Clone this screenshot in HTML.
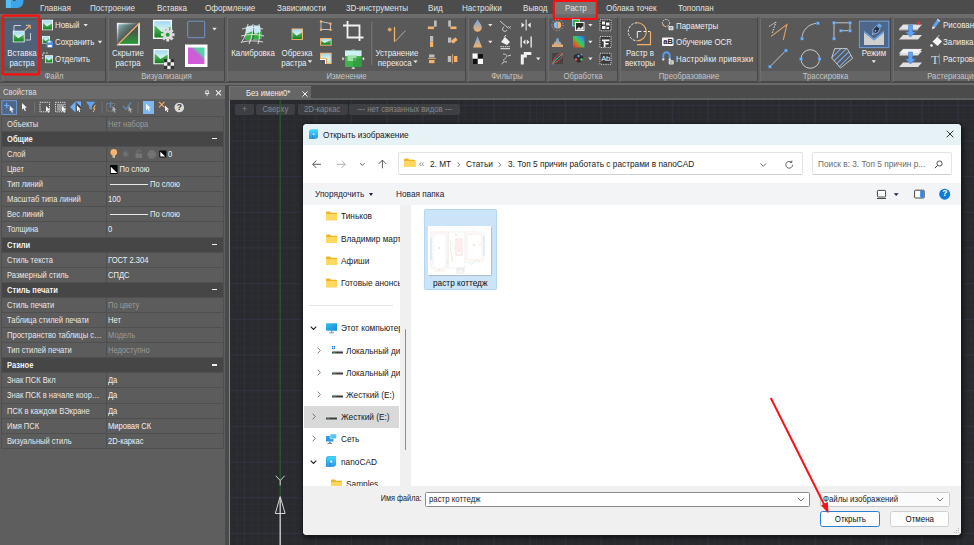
<!DOCTYPE html>
<html lang="ru">
<head>
<meta charset="utf-8">
<title>nanoCAD — Открыть изображение</title>
<style>
*{box-sizing:border-box;margin:0;padding:0}
html,body{width:974px;height:545px;overflow:hidden;background:#5e5e5e;font-family:"Liberation Sans","DejaVu Sans",sans-serif;font-size:9px;color:#e6e6e6}
.abs{position:absolute}
#app{position:relative;width:974px;height:545px;overflow:hidden;background:#5e5e5e}
/* menu */
#menu{left:0;top:0;width:974px;height:14px;background:#4c4c4c}
#menu span{position:absolute;top:2.8px;font-size:9.3px;color:#e2e2e2;white-space:nowrap;transform:scaleX(.87);transform-origin:0 50%}
#rtab{left:554px;top:1px;width:43px;height:14px;background:#787878}
/* ribbon */
#ribbon{left:0;top:14px;width:974px;height:71px;background:linear-gradient(#6e6e6e 0,#6a6a6a 2.5px,#5f5f5f 2.5px,#5f5f5f 68px,#4a4a4a 68px,#4a4a4a 69px,#6a6a6a 69px)}
.grp{position:absolute;top:2.5px;height:65.5px;background:linear-gradient(#595959 0,#595959 53.5px,#656565 53.5px);border:1px solid #6e6e6e;border-right-color:#474747;border-bottom-color:#474747}
.grp .lbl{position:absolute;left:0;right:0;bottom:-1px;height:11px;text-align:center;font-size:8.6px;line-height:11px;color:#c4c4c4;transform:scaleX(.9)}
.rt{position:absolute;font-size:8.8px;color:#ececec;white-space:nowrap;line-height:10px;transform:scaleX(.9);transform-origin:0 50%}
.rt.c{transform-origin:50% 50%;text-align:center}
.tri{position:absolute;width:0;height:0;border-left:2.5px solid transparent;border-right:2.5px solid transparent;border-top:3px solid #e4e4e4}
/* props */
#ptitle{left:0;top:86px;width:225px;height:12.500px;background:#6b6b6b;font-size:8.7px;line-height:13px;color:#dedede;padding-left:3px}
#ptitle span{display:inline-block;transform:scaleX(.88);transform-origin:0 50%}
#ptool{left:0;top:99px;width:225px;height:17px;background:#5c5c5c}
#ptab{left:1px;top:115.800px;width:223px;height:333px;background:#5c5c5c;border:1px solid #4f4f4f}
.row{position:absolute;left:0;width:221px;height:15.1px;border-bottom:1px solid #4f4f4f;font-size:8.7px;line-height:14px;white-space:nowrap}
.row .k{position:absolute;left:5px;top:0;color:#e8e8e8;width:113px;overflow:hidden;transform:scaleX(.87);transform-origin:0 50%}
.row .v{position:absolute;left:106px;top:0;color:#f0f0f0;transform:scaleX(.87);transform-origin:0 50%}
.row .v.d{color:#9a9a9a}
.row.h{background:#464646;font-weight:bold;z-index:2}
.row .v.n{transform:none;left:106px;width:110px;height:14px}
.row .v.n em{position:absolute;top:0;font-style:normal;transform:scaleX(.87);transform-origin:0 50%}
.row.h .k{color:#f2f2f2}
.row.h i{position:absolute;right:6px;top:6px;width:5px;height:1.6px;background:#eee}
#pdiv{left:103.500px;top:0;width:1px;height:331px;background:#4f4f4f}
/* canvas */
#canvas{left:230px;top:100px;width:744px;height:445px;background-color:#292a2e;
background-image:linear-gradient(#30323f 1px,transparent 1px),linear-gradient(90deg,#30323f 1px,transparent 1px),linear-gradient(#2d2e34 1px,transparent 1px),linear-gradient(90deg,#2d2e34 1px,transparent 1px);
background-size:35.700px 35.700px,35.700px 35.700px,7.140px 7.140px,7.140px 7.140px;
background-position:0 4.800px,13.900px 0,0 4.800px,6.760px 0}
#tabbar{left:229px;top:85px;width:745px;height:15px;background:#4b4b4b;border-bottom:2px solid #606060}
#dtab{left:229px;top:86px;width:82px;height:12.500px;background:#666;font-size:8.7px;line-height:12.5px;color:#ededed;padding-left:15.5px;border-left:1px solid #7a7a7a;border-top:1px solid #747474}
#dtab span{display:inline-block;transform:scaleX(.88);transform-origin:0 50%}
.vb{position:absolute;top:103.500px;height:11.700px;background:#3d3f43;border-radius:2px;color:#85878c;font-size:8.600px;line-height:11.700px;text-align:center;white-space:nowrap}
.vb span{display:inline-block;transform:scaleX(.9)}
/* dialog */
#dlg{left:303px;top:124px;width:658px;height:411px;background:#fff;border-radius:4px;overflow:hidden;font-family:"Liberation Sans","DejaVu Sans",sans-serif;color:#1b1b1b;box-shadow:0 0 0 .6px #1c1c1c,1px 2px 5px 1px rgba(0,0,0,.6)}
#dtitle{left:0;top:0;width:659px;height:20.700px;background:#e6f2f6}
#daddr{left:0;top:20.700px;width:659px;height:38.100px;background:#fff}
#dtool{left:0;top:58.800px;width:659px;height:21.800px;background:#f3f4f6}
#dnav{left:0;top:80.600px;width:96.600px;height:281.400px;background:#fff;overflow:hidden}
#dsplit{left:96.600px;top:80.600px;width:11.100px;height:281.400px;background:#f0f0f0}
#dbot{left:0;top:362px;width:659px;height:49px;background:#f0f0f0}
.dt{position:absolute;font-size:9px;line-height:11px;white-space:nowrap;color:#1b1b1b;transform:scaleX(.92);transform-origin:0 50%}
.ni{position:absolute;font-size:8.9px;color:#1a1a1a;white-space:nowrap}
.box{position:absolute;background:#fff;border:1px solid #d5d5d5;border-radius:2px}
.btn{position:absolute;height:16.400px;background:#fdfdfd;border:1px solid #d0d0d0;border-radius:2.500px;font-size:8.800px;line-height:14.400px;text-align:center;color:#111}
.btn span{display:inline-block;transform:scaleX(.9)}
</style>
</head>
<body>
<div id="app">

<!-- MENU -->
<div id="menu" class="abs">
<div id="rtab" class="abs"></div>
<span style="left:40px">Главная</span>
<span style="left:90px">Построение</span>
<span style="left:157px">Вставка</span>
<span style="left:205px">Оформление</span>
<span style="left:277px">Зависимости</span>
<span style="left:346px">3D-инструменты</span>
<span style="left:428px">Вид</span>
<span style="left:462px">Настройки</span>
<span style="left:523px">Вывод</span>
<span style="left:565px">Растр</span>
<span style="left:606px">Облака точек</span>
<span style="left:678px">Топоплан</span>
</div>

<!-- RIBBON -->
<div id="ribbon" class="abs">
<div class="grp" style="left:2px;width:104px"><div class="lbl">Файл</div></div>
<div class="grp" style="left:108px;width:117px"><div class="lbl">Визуализация</div></div>
<div class="grp" style="left:227px;width:239px"><div class="lbl">Изменение</div></div>
<div class="grp" style="left:468px;width:78px"><div class="lbl">Фильтры</div></div>
<div class="grp" style="left:548px;width:70px"><div class="lbl">Обработка</div></div>
<div class="grp" style="left:620px;width:138px"><div class="lbl">Преобразование</div></div>
<div class="grp" style="left:760px;width:131px"><div class="lbl">Трассировка</div></div>
<div class="grp" style="left:893px;width:90px"><div class="lbl" style="text-align:left;padding-left:32px">Растеризация</div></div>
<!--RC0-->
<svg class="abs" style="left:0;top:-14px;overflow:visible" width="974" height="86" viewBox="0 0 974 86">
<defs>
<linearGradient id="gimg" x1="0" y1="0" x2="0" y2="1"><stop offset="0" stop-color="#9fd8f0"/><stop offset=".5" stop-color="#d4f0ee"/><stop offset="1" stop-color="#bfe8d0"/></linearGradient>
<linearGradient id="gmt" x1="0" y1="0" x2="0" y2="1"><stop offset="0" stop-color="#5cc468"/><stop offset="1" stop-color="#15801f"/></linearGradient>
<linearGradient id="gor" x1="0" y1="0" x2="0" y2="1"><stop offset="0" stop-color="#6fa6e6"/><stop offset="1" stop-color="#f5b26a"/></linearGradient>
<linearGradient id="grgb" x1="0" y1="1" x2="1" y2="0"><stop offset="0" stop-color="#f02a2a"/><stop offset=".3" stop-color="#c8702a"/><stop offset=".5" stop-color="#34d050"/><stop offset=".72" stop-color="#2fa8c0"/><stop offset="1" stop-color="#2a5cf0"/></linearGradient>
<linearGradient id="gmg" x1="0" y1="1" x2="1" y2="0"><stop offset="0" stop-color="#dc55e0"/><stop offset=".58" stop-color="#c860d4"/><stop offset=".72" stop-color="#58cfa5"/><stop offset="1" stop-color="#45d9a0"/></linearGradient>
<linearGradient id="ggreen" x1="0" y1="0" x2="0" y2="1"><stop offset="0" stop-color="#cfeff5"/><stop offset=".3" stop-color="#8fdc9c"/><stop offset="1" stop-color="#2c9a3a"/></linearGradient>
<symbol id="img" viewBox="0 0 12 12"><rect width="12" height="12" fill="#fbfbfb"/><rect x="1" y="1" width="10" height="10" fill="url(#gimg)"/><path d="M1 3.500l4.500 4.200 5.500-3.500V11H1z" fill="url(#gmt)"/></symbol>
<symbol id="imgo" viewBox="0 0 12 12"><rect width="12" height="12" fill="#f5b26a"/><rect x="1" y="1" width="10" height="10" fill="url(#gimg)"/><path d="M1 3.500l4.500 4.200 5.500-3.500V11H1z" fill="url(#gmt)"/></symbol>
<symbol id="sq" viewBox="0 0 4 4"><rect x=".4" y=".4" width="3.200" height="3.200" fill="#7db3ee" stroke="#4a7fc0" stroke-width=".7"/></symbol>
</defs>

<!-- G1 Файл -->
<rect x="5.200" y="20.500" width="33" height="46" fill="#4f6179"/>
<path d="M14 31v-5.500h7M26 25.500h1M30.500 33v7h-5" fill="none" stroke="#c9ced6" stroke-width="1"/>
<path d="M24.500 30.500l5.500-5M26.500 25.300h3.700v3.700" fill="none" stroke="#f2b06a" stroke-width="1.100"/>
<use href="#img" x="12.600" y="30.400" width="12.200" height="12.200"/>
<rect x="2.700" y="15.700" width="36.400" height="58.700" fill="none" stroke="#fa0f0f" stroke-width="2.200" rx="1"/>
<rect x="553.800" y="1" width="43" height="17.900" fill="none" stroke="#fa0f0f" stroke-width="2.200" rx="1"/>
<path d="M5.900 0h17.500v2a6 6 0 0 1-6 6H5.900z" fill="#3ea4e8"/><path d="M5.900 0h5v8h-5z" fill="#57bdf5"/><path d="M13.200 0h2.200v.8h-2.200z" fill="#333"/>
<use href="#img" x="42" y="19.500" width="11" height="11"/>
<use href="#img" x="42" y="35.800" width="8" height="8"/>
<path d="M46.500 40.500h5l1.500 1.500v5.500h-6.500z" fill="#4f8fe6"/><rect x="47.800" y="45" width="4" height="2.200" fill="#fff"/><rect x="47.800" y="40.800" width="3" height="1.800" fill="#dbe8fb"/>
<path d="M42.800 59v-6h5.500" fill="none" stroke="#e6e6e6" stroke-width=".9" stroke-dasharray="2 1"/>
<use href="#img" x="45" y="55" width="8" height="8.500"/>
<path d="M83.500 24l2.200 2.600 2.200-2.600zM97.800 40.800l2.200 2.600 2.200-2.600z" fill="#e8e8e8"/>

<!-- G2 Визуализация -->
<g>
<linearGradient id="gfade" x1="0" y1="0" x2="1" y2="1"><stop offset="0" stop-color="#fff" stop-opacity=".95"/><stop offset=".5" stop-color="#fff" stop-opacity="0"/></linearGradient>
<linearGradient id="gfade2" x1="0" y1="0" x2="1" y2="1"><stop offset="0" stop-color="#9fd0e0" stop-opacity=".95"/><stop offset=".4" stop-color="#5a8a78" stop-opacity=".35"/><stop offset=".5" stop-color="#555" stop-opacity="0"/></linearGradient>
<linearGradient id="glr" x1="0" y1="0" x2="0" y2="1"><stop offset="0" stop-color="#525252"/><stop offset=".4" stop-color="#4a5a4c"/><stop offset="1" stop-color="#27a036"/></linearGradient>
<clipPath id="cul"><path d="M116.500 22.500h23.200L116.500 45.700z"/></clipPath>
<clipPath id="clr"><path d="M140 22.500v23.200h-23.500z"/></clipPath>
<g clip-path="url(#cul)"><rect x="117.500" y="23.500" width="21.500" height="21.200" fill="url(#gfade2)" stroke="url(#gfade)" stroke-width="1.600"/></g>
<g clip-path="url(#clr)"><rect x="117.500" y="23.500" width="21.500" height="21.200" fill="url(#glr)" stroke="#fbfbfb" stroke-width="1.600"/></g>
<path d="M117 45.400L139.700 22.800" stroke="#f2b06a" stroke-width="1.300"/>
</g>
<use href="#img" x="152.800" y="19.600" width="19.400" height="19.400"/>
<g transform="translate(167.700 34.700)"><circle r="5" fill="#dcdcdc" stroke="#5b5b5b" stroke-width=".8"/><g fill="#dcdcdc"><rect x="-1.500" y="-6.800" width="3" height="13.600"/><rect x="-1.500" y="-6.800" width="3" height="13.600" transform="rotate(45)"/><rect x="-1.500" y="-6.800" width="3" height="13.600" transform="rotate(90)"/><rect x="-1.500" y="-6.800" width="3" height="13.600" transform="rotate(135)"/></g><circle r="2" fill="#2f9a3c"/></g>
<rect x="187.700" y="21.200" width="17" height="16.500" fill="none" stroke="#6e93cc" stroke-width="1" rx=".8"/>
<path d="M212.300 27.800l2.200 2.600 2.200-2.600z" fill="#e8e8e8"/>
<use href="#img" x="153" y="49" width="16.300" height="15.500"/>
<g><rect x="164" y="59" width="10" height="10" fill="#efefef"/><path d="M164 59h3.300v3.300H164zM170.600 59H174v3.300h-3.400zM167.300 62.300h3.300v3.400h-3.300zM164 65.700h3.300V69H164zM170.600 65.700H174V69h-3.400z" fill="#333"/></g>
<rect x="185" y="44.500" width="22.500" height="22.500" fill="#fdfdfd"/><rect x="188" y="47.500" width="16.500" height="16.500" fill="url(#gmg)"/>

<!-- G3 Изменение -->
<g>
<path d="M246 27c5-2 10-2 14-1l2 12c-5 2-11 2-17 2z" fill="#c4e9f6"/>
<path d="M245.500 34c3-1 5-2 7-3l3 3 6-3 .5 7c-5 2-11 2-17 2z" fill="#3cae48"/><path d="M253.500 25c.3 6 0 12-1.500 17" stroke="#3a3a3a" stroke-width=".7" fill="none"/>
<g fill="none" stroke="#e4e4e4" stroke-width=".9"><path d="M248 24c-1 6-3 14-7 19M253 24c0 6-1 14-4 20M259 24c1 6 1 14-1 20M242 29c7-2 14-2 21 0M241 36c8-2 16-2 23 0M242 42c7-1.500 14-1.500 21 0"/></g>
</g>
<use href="#imgo" x="291.300" y="28.300" width="11.800" height="11.600"/>
<path d="M307.800 60.300l2.200 2.600 2.200-2.600zM413.300 60.500l2.200 2.600 2.200-2.600z" fill="#e8e8e8"/>
<path d="M321 21.500l9.500 2v6h-9.500z" fill="none" stroke="#dcdcdc" stroke-width=".8"/><g fill="#f5b26a"><circle cx="321" cy="21.500" r="1.200"/><circle cx="330.500" cy="23.700" r="1.200"/><circle cx="321" cy="29.700" r="1.200"/><circle cx="330.500" cy="29.700" r="1.200"/></g>
<rect x="320" y="38" width="11.700" height="7.700" fill="#f5b26a"/><rect x="321" y="39" width="9.700" height="5.700" fill="url(#gimg)"/><path d="M321 40.500l3.500 2.500 6.200-2.800v4.500H321z" fill="url(#gmt)"/>
<path d="M320 52.700h11.700V64h-5.500v-5H320z" fill="#f5b26a"/><path d="M321 53.700h9.700V63h-3.500v-5H321z" fill="url(#gimg)"/><path d="M320 59v1h5v4h1v-5z" fill="#fff"/>
<g fill="none" stroke="#f2f2f2" stroke-width="1.800"><path d="M347.500 21v16.500h16"/><path d="M343 25.500h16.500V41"/></g>
<g><rect x="345" y="50.500" width="16.500" height="16.500" fill="#3fb24c"/><rect x="345" y="50.500" width="16.500" height="5.500" fill="#cdeff6"/><rect x="347.500" y="55" width="9" height="6" fill="#a6e3b2" opacity=".9"/><rect x="353" y="58" width="8.500" height="9" fill="#2c9a3a" opacity=".7"/><path d="M351.700 49.800h3.200M342.600 57.500l1.600 1.300-1.600 1.300zM364 57.500l-1.600 1.300 1.600 1.300zM351.800 68.500l1.500-1.600 1.500 1.600z" fill="#eee" stroke="#eee" stroke-width=".5"/></g>
<path d="M371.800 21.500v44" stroke="#7a7a7a" stroke-width=".9"/>
<path d="M394.500 27v14.800" stroke="#f2b06a" stroke-width="1.300"/><path d="M395.300 41.300l10.200-10.700" stroke="#b5b5b5" stroke-width=".9"/><path d="M387.600 29.600h4.200M389.700 27.500v4.200M388.200 28.100l3 3M391.200 28.100l-3 3" stroke="#f2b06a" stroke-width=".9"/>
<!-- align icons -->
<g fill="#f5b26a"><rect x="427.800" y="26.500" width="6.200" height="2.600"/><rect x="447.300" y="26.500" width="6.200" height="2.600" transform="translate(3 0)"/><rect x="430" y="41.500" width="3.200" height="5.500"/><rect x="451.500" y="39" width="6" height="3.500" transform="rotate(-40 454 41)"/><rect x="429" y="60" width="5.500" height="3.200"/><rect x="428" y="58" width="8" height=".8"/><rect x="454" y="56" width="3.400" height="6"/><rect x="452.300" y="54" width=".8" height="9.500"/></g>
<g fill="#bdbdbd"><rect x="434" y="20.500" width="2.700" height="6.200"/><rect x="448.200" y="20.500" width="2.700" height="6.200"/><rect x="430" y="36" width="3.200" height="5.500"/><rect x="448" y="37.500" width="3.200" height="5.200"/><rect x="429" y="54.500" width="5.500" height="3"/><rect x="447.800" y="56" width="3.400" height="6"/></g>

<!-- G4 Фильтры -->
<path d="M477.600 19.500c2.800 4 4.200 6 4.200 8a4.200 4.200 0 0 1-8.400 0c0-2 1.400-4 4.200-8z" fill="url(#gor)"/>
<path d="M477.600 36l4.500 11.500h-9z" fill="url(#gor)"/>
<g><rect x="472.500" y="53.500" width="10.500" height="10.500" fill="#fafafa"/><rect x="477.700" y="53.500" width="5.300" height="5.200" fill="#111"/><rect x="472.500" y="58.700" width="5.200" height="5.300" fill="#111"/></g>
<path d="M488.100 24l2.200 2.600 2.200-2.600zM488.100 40.700l2.200 2.600 2.200-2.600zM536 57.600l2.200 2.600 2.200-2.600z" fill="#e8e8e8"/>
<g fill="none" stroke="#dadada" stroke-width=".9"><path d="M500 21l8 7M504 27a2.300 2.300 0 1 0 3 3"/><path d="M508 26l3 3M511 26l-3 3" stroke-dasharray="1 .8"/></g>
<g><path d="M501 42l4-5 5 5-3 3z" fill="#f2f2f2"/><path d="M506 35l-2 2.500" stroke="#f2f2f2" stroke-width=".9"/><path d="M500.500 46.700h9.500" stroke="#f2f2f2" stroke-width=".9" stroke-dasharray="1.400 .8"/><rect x="500.500" y="48.200" width="9.500" height="1" fill="#f2f2f2"/></g>
<path d="M503 54c4 0 5 2 2.500 4s-3 4 1.500 4M508 56l3-1M504 62l-2.500 2" fill="none" stroke="#dadada" stroke-width=".9"/>
<g fill="#f0f0f0"><rect x="525.600" y="19.500" width="1" height="11"/><path d="M521.500 22.500l3 2.600-3 2.600zM530.700 22.500l-3 2.600 3 2.600z"/>
<rect x="520.500" y="36.500" width="1.300" height="11"/><rect x="530.500" y="36.500" width="1.300" height="11"/><path d="M522.800 42l2.700-2.400v4.800zM529.500 42l-2.700-2.400v4.800z"/>
<path d="M520.800 64.500v-10h3v-2.500h7.500v3h-4.500v2.500h-3v7z"/></g>

<!-- G5 Обработка -->
<g><circle cx="557.500" cy="25" r="3.800" fill="#3a3a3a"/><path d="M557.500 21.200a3.800 3.800 0 0 1 0 7.600z" fill="#f5b26a"/><path d="M557.500 21.200a3.800 3.800 0 0 0 0 7.600z" fill="#8fb7ea"/><circle cx="557.500" cy="25" r="5.600" fill="none" stroke="#cfcfcf" stroke-width=".8" stroke-dasharray="1 1.900"/></g>
<path d="M552 47h11v-2.500h-1.500l-1-2.500h-1l-1.200-4h-1.600l-1.200 4h-1l-1 2.500H552z" fill="url(#gor)" opacity=".95"/>
<g><rect x="552" y="53" width="11" height="11" fill="#444"/><path d="M552.500 63.500c2-7 6-10 10-10M552.500 63.500c7-2 10-6 10-10" fill="none" stroke="#e84a4a" stroke-width=".9"/><path d="M552.500 63.500c3-6 7-9 10-10" fill="none" stroke="#4a8ae8" stroke-width=".9" transform="translate(0 1.200)"/><path d="M552.500 63.500l10-10" stroke="#41c04f" stroke-width=".9"/></g>
<g><rect x="572.500" y="19.500" width="7" height="6.500" fill="#3fae4a" stroke="#9fd0f5" stroke-width=".8"/><rect x="575.500" y="22.500" width="8.500" height="8" fill="#2a2a2a" stroke="#f2f2f2" stroke-width="1"/><path d="M576.300 29.700l2.500-2.700 1.800 1.500 2.700-2.800v4z" fill="#f2f2f2"/></g>
<rect x="573" y="36" width="11.500" height="11.500" fill="url(#grgb)"/>
<g><path d="M573.500 56.500a5 4.200 0 1 1 9 3.500c-1.500 1-1.500 2-3 2.500s-6-2-6-6z" fill="#2e2e2e"/><circle cx="576" cy="59.500" r="1.200" fill="#e85a6a"/><circle cx="578.500" cy="56" r="1.200" fill="#5aa0e8"/><circle cx="581.500" cy="59.500" r="1.200" fill="#4fc85a"/><circle cx="581.500" cy="54.600" r=".9" fill="#5aa0e8"/></g>
<path d="M588.200 24l2.200 2.600 2.200-2.600zM588.200 40.700l2.200 2.600 2.200-2.600zM588.200 57.600l2.200 2.600 2.200-2.600z" fill="#e8e8e8"/>
<g><rect x="600" y="19.800" width="11" height="11" fill="#3a3a3a" stroke="#e6e6e6" stroke-width=".9" stroke-dasharray="1.200 1"/><rect x="602" y="21.500" width="3" height="3" fill="#f2f2f2"/><rect x="606" y="22.500" width="3.500" height="3" fill="#f2f2f2"/><rect x="602" y="26" width="3.500" height="3" fill="#f2f2f2"/><rect x="606.500" y="27" width="2.500" height="2" fill="#f2f2f2"/></g>
<g><rect x="600" y="36.500" width="11" height="11" fill="#3a3a3a" stroke="#e6e6e6" stroke-width=".9" stroke-dasharray="1.200 1"/><path d="M602 39.500h7.500v1.800h-4v1.700h3v1.500h-3v2.500h-1.800v-5.700H602z" fill="#f2f2f2"/></g>
<g><rect x="600" y="53.300" width="11" height="11" fill="#3a3a3a" stroke="#e6e6e6" stroke-width=".9" stroke-dasharray="1.200 1"/></g>

<!-- G6 Преобразование -->
<g fill="none"><path d="M637.300 22.800a9 9 0 0 0 0 18" stroke="#ececec" stroke-width="1" stroke-dasharray="2.600 1.300"/><path d="M637.300 22.800a9 9 0 0 1 0 18" stroke="#f2b06a" stroke-width="1.100"/>
<path d="M650.500 31.500v13.200h-13.500" stroke="#f2b06a" stroke-width="1.200"/><path d="M637.300 38v-6.500h4M643.500 31.500h2.500M648 31.500h2" stroke="#ececec" stroke-width="1"/></g>
<g><circle cx="666" cy="23" r="3.600" fill="none" stroke="#e6e6e6" stroke-width=".9" stroke-dasharray="1.600 1"/><path d="M662.500 23.500a3.600 3.600 0 0 0 3.500 3.200" fill="none" stroke="#f2b06a" stroke-width="1"/><rect x="668.500" y="26" width="5" height="4.200" rx=".8" fill="#e2e2e2"/><path d="M669.700 27.500h2.600M669.700 28.800h2.600" stroke="#666" stroke-width=".5"/></g>
<g><rect x="662" y="37.500" width="11.500" height="8.500" rx="1" fill="#f4f4f4"/></g>
<g><path d="M663.300 59v-3.500a3.200 3.200 0 0 1 6.400 0V59" fill="none" stroke="#5a9cf0" stroke-width="1.900"/><rect x="662.300" y="58.600" width="2" height="1.800" fill="#f2f2f2"/><rect x="668.700" y="58.600" width="2" height="1.800" fill="#f2f2f2"/><rect x="668.700" y="60.300" width="5" height="4.200" rx=".8" fill="#e2e2e2"/><path d="M669.900 61.800h2.600M669.900 63.100h2.600" stroke="#666" stroke-width=".5"/></g>

<!-- G7 Трассировка -->
<path d="M771 36.400l15.900-11.800-3.600 15.400" fill="none" stroke="#e0a066" stroke-width="1.100"/>
<path d="M769 26.400l7-4.400-4 11.500" fill="none" stroke="#ececec" stroke-width=".9" stroke-dasharray="1.600 1"/>
<path d="M802 38.600c0-8 6-15 15.800-15.400" fill="none" stroke="#d0d0d0" stroke-width=".9"/>
<use href="#sq" x="800.200" y="36.800" width="3.700" height="3.700"/><use href="#sq" x="816" y="21.400" width="3.700" height="3.700"/>
<path d="M834 38.600V22.800h16v7.900h-9.200" fill="none" stroke="#d0d0d0" stroke-width=".9"/>
<use href="#sq" x="832.200" y="21" width="3.700" height="3.700"/><use href="#sq" x="848.200" y="21" width="3.700" height="3.700"/><use href="#sq" x="832.200" y="36.800" width="3.700" height="3.700"/><use href="#sq" x="839" y="28.900" width="3.700" height="3.700"/><use href="#sq" x="848.200" y="28.900" width="3.700" height="3.700"/>
<path d="M770 66.600l15.900-16.100" stroke="#d0d0d0" stroke-width=".9"/>
<use href="#sq" x="768.200" y="64.800" width="3.700" height="3.700"/><use href="#sq" x="784" y="48.700" width="3.700" height="3.700"/>
<circle cx="810.300" cy="59" r="9.300" fill="none" stroke="#d8d8d8" stroke-width=".9"/>
<use href="#sq" x="799.200" y="57.200" width="3.700" height="3.700"/><use href="#sq" x="817.700" y="57.200" width="3.700" height="3.700"/>
<g><clipPath id="pent"><path d="M834.700 48.600h12.500l5.400 9.700-12.100 9.700-8.800-10z"/></clipPath>
<g clip-path="url(#pent)" stroke="#74a8ea" stroke-width="1.100"><path d="M826 58l14-14M828 61.500l17-17M830.500 64.500l19-19M833.500 67l19-19M837 69l19-19M841 70.500l16-16"/></g>
<path d="M834.700 48.600h12.500l5.400 9.700-12.100 9.700-8.800-10z" fill="none" stroke="#cfcfcf" stroke-width=".9"/></g>
<rect x="859.400" y="21.200" width="29.400" height="26.400" fill="#4e6688" stroke="#6f9fdc" stroke-width="1"/>
<path d="M864 32.500l10 8 10-8v12.500h-20z" fill="#cfcfcf"/><path d="M864 31.500l10 8 10-8" fill="none" stroke="#6faaf0" stroke-width="1.100"/>
<g transform="translate(876.500 29.500) rotate(38)"><path d="M-2.200 -3h4.400l.8 4.500-3 5-3-5z" fill="#24364e" stroke="#9cc4f5" stroke-width=".7"/><rect x="-2" y="-6.300" width="4" height="2.600" fill="#6faaf0"/><path d="M0 6.500v-4" stroke="#9cc4f5" stroke-width=".6"/><circle cy="1.600" r=".8" fill="#9cc4f5"/></g>
<path d="M871.600 60.300l2.200 2.600 2.200-2.600z" fill="#e8e8e8"/>

<!-- G8 Растеризация -->
<g id="lay1"><path d="M903 24.500h19l-4 4.500h-19z" fill="#e4e4e4"/><path d="M899 29h19v1.400h-19z" fill="#bdbdbd"/><path d="M903 35h19l-4 4.500h-19z" fill="#e0e0e0"/><path d="M908.500 25h4v7h3l-5 5-5-5h3z" fill="#5fa3ef" stroke="#3a7bd0" stroke-width=".5"/></g>
<path d="M916.800 21.200l3.600 3.600M920.400 21.200l-3.600 3.600" stroke="#e8333a" stroke-width="1.100"/>
<g><path d="M903 51h19l-4 4.500h-19z" fill="#e4e4e4"/><path d="M903 49h19l-4 4.500h-19z" fill="#f2f2f2" stroke="#bbb" stroke-width=".3"/><path d="M903 62.500h19l-4 4.500h-19z" fill="#e0e0e0"/><path d="M908.500 52h4v7h3l-5 5-5-5h3z" fill="#5fa3ef" stroke="#3a7bd0" stroke-width=".5"/></g>
<g transform="translate(935.300 24.900) rotate(35)"><rect x="-1.600" y="-5.500" width="3.200" height="8" fill="#5fa3ef"/><path d="M-1.600 2.500h3.200L0 5.500z" fill="#f2f2f2"/><rect x="-1.600" y="-6.300" width="3.200" height="1.200" fill="#dfe9f7"/></g>
<g><path d="M932.500 41.500l5-4.500 4.500 4.500-4.500 4.500z" fill="#f6f6f6"/><path d="M939.500 35l-3 3" stroke="#e6e6e6" stroke-width=".8"/><circle cx="931.500" cy="45.500" r="1.300" fill="#f6f6f6"/></g>
<path d="M939.300 54v10.500" stroke="#5fa3ef" stroke-width=".9"/>
</svg>

<span class="rt c" style="left:1px;top:34px;width:42px">Вставка<br>растра</span>
<span class="rt" style="left:55px;top:6px">Новый</span>
<span class="rt" style="left:55px;top:23px">Сохранить</span>
<span class="rt" style="left:55px;top:40px">Отделить</span>
<span class="rt c" style="left:107px;top:34px;width:42px">Скрытие<br>растра</span>
<span class="rt c" style="left:228px;top:34px;width:50px">Калибровка</span>
<span class="rt c" style="left:272px;top:34px;width:50px">Обрезка<br><span style="margin-right:7px">растра</span></span>
<span class="rt c" style="left:367px;top:34px;width:60px">Устранение<br><span style="margin-right:5px">перекоса</span></span>
<span class="rt c" style="left:615px;top:34px;width:50px">Растр в<br>векторы</span>
<span class="rt" style="left:675.500px;top:6.500px">Параметры</span>
<span class="rt" style="left:675.500px;top:23.200px">Обучение OCR</span>
<span class="rt" style="left:675.500px;top:40px;letter-spacing:.2px">Настройки привязки</span>
<span class="rt c" style="left:854px;top:34px;width:40px">Режим</span>
<span class="rt" style="left:943.400px;top:6px">Рисование</span>
<span class="rt" style="left:943.400px;top:23px">Заливка</span>
<span class="rt" style="left:943.400px;top:40px">Растровый</span>
<span class="rt" style="left:663.300px;top:23.400px;font-size:7.500px;color:#222;font-weight:bold;transform:none">aB</span>
<span class="rt" style="left:601.200px;top:40.300px;font-size:7.500px;color:#f2f2f2;transform:none;letter-spacing:-.3px">Ab</span>
<span class="rt" style="left:931px;top:38.500px;font-size:13px;color:#d6d6d6;transform:none;font-family:'Liberation Serif',serif;line-height:13px">T</span>
<!--RC1-->
</div>

<!-- PROPERTIES PANEL -->
<div id="ptitle" class="abs"><span>Свойства</span><svg class="abs" style="left:203px;top:2.500px" width="20" height="9" viewBox="0 0 20 9"><path d="M2.800 1.800h2.600v2.600H2.800zM1.800 4.600h4.600M4.100 4.600v2.600" stroke="#f0f0f0" stroke-width=".8" fill="none"/><path d="M13 1.300l5 5M18 1.300l-5 5" stroke="#f0f0f0" stroke-width="1.100"/></svg></div>
<div id="ptool" class="abs"><svg class="abs" style="left:0;top:0" width="225" height="17" viewBox="0 99 225 17">
<defs><symbol id="cur" viewBox="0 0 6 9"><path d="M0 0v7.300l1.700-1.600 1.300 3 1.300-.6-1.300-2.900H5.400z" fill="#f4f4f4"/></symbol></defs>
<rect x="1.800" y="100.700" width="14.800" height="13.600" fill="#4e6688" stroke="#6f9fdc" stroke-width=".9"/>
<path d="M4 105.500h5.500M6.700 102.700v5.500" stroke="#6fb0f5" stroke-width="1.200"/><use href="#cur" x="9.500" y="105.500" width="5" height="7.500"/>
<use href="#cur" x="22" y="103" width="5.500" height="8.300"/>
<path d="M34.500 102v11M102 102v11M138 102v11" stroke="#777" stroke-width=".8"/>
<rect x="40" y="102.300" width="9.500" height="9.500" fill="none" stroke="#e6e6e6" stroke-width="1" stroke-dasharray="1.200 1"/><use href="#cur" x="46" y="106" width="4.600" height="7"/>
<rect x="55.500" y="102.300" width="9.500" height="9.500" fill="none" stroke="#e6e6e6" stroke-width="1" stroke-dasharray="1.200 1"/><rect x="57.500" y="104.300" width="6" height="6" fill="#9a9a9a" stroke="#e6e6e6" stroke-width=".6" stroke-dasharray="1 .8"/><use href="#cur" x="62" y="106" width="4.600" height="7"/>
<path d="M70 107l5.500-5.500v11zM75.500 101.500H81v11z" fill="#6fb0f5"/><path d="M75.500 101.500L81 107v5.500z" fill="#3a3a3a"/><use href="#cur" x="77" y="105.500" width="4.600" height="7"/>
<path d="M85.800 101.800h9.500l-3.500 4.200v4l-2.500-1.500v-2.500z" fill="#5fa3ef"/><path d="M95.500 105l-2.200 3.300h1.600l-1.600 3.700" fill="none" stroke="#f2b06a" stroke-width="1"/>
<g opacity=".55"><rect x="106.800" y="103.500" width="7.500" height="7.500" fill="none" stroke="#bdbdbd" stroke-width=".9" stroke-dasharray="1.200 1"/><path d="M110.500 101.500l2.300 2.600h-1.400v4h-1.800v-4h-1.400z" fill="#5fa3ef"/><use href="#cur" x="112.300" y="106" width="4.600" height="7"/>
<path d="M123 106l3 3.300 5-6.800" fill="none" stroke="#5fa3ef" stroke-width="1.500"/><use href="#cur" x="128.300" y="106" width="4.600" height="7"/></g>
<rect x="143" y="101" width="11" height="13" fill="#7db6f2"/><use href="#cur" x="146" y="103.500" width="5.500" height="8.300"/>
<path d="M159 101.800l5.500 5.500M164.500 101.800l-5.500 5.500" stroke="#f2b06a" stroke-width="1.100"/><use href="#cur" x="165" y="105.500" width="4.600" height="7"/>
<circle cx="179.300" cy="107.500" r="4.800" fill="#d9d9d9"/>
</svg>
<span class="abs" style="left:176.800px;top:3.300px;font-size:8.500px;line-height:10px;font-weight:bold;color:#3a3a3a">?</span>
</div>
<div id="ptab" class="abs">
<div class="row" style="top:0.0px"><span class="k">Объекты</span><span class="v d">Нет набора</span></div>
<div class="row h" style="top:15.09px"><span class="k">Общие</span><i></i></div>
<div class="row" style="top:30.18px"><span class="k">Слой</span><span class="v n"><svg class="abs" style="left:1px;top:1px" width="62" height="12" viewBox="0 0 62 12"><circle cx="4.800" cy="4.300" r="3.300" fill="#fab26c"/><path d="M3.500 7h2.600v2.800H3.500z" fill="#cfc08f"/><g transform="translate(-3 0)"><g stroke="#727272" stroke-width="1"><path d="M19.500 2.500v7M16 6h7M17 3.500l5 5M22 3.500l-5 5"/></g><circle cx="19.500" cy="6" r="1.800" fill="#727272"/><rect x="29.500" y="5.500" width="6.500" height="4.500" fill="#757575"/><path d="M31 5.500V4a2 2 0 0 1 4 0" stroke="#757575" fill="none"/><rect x="41.500" y="4.500" width="8.500" height="4" fill="#757575"/><rect x="43" y="2.500" width="5.500" height="2" fill="#757575"/><rect x="43" y="8.500" width="5.500" height="2" fill="#757575"/><rect x="53.300" y="2.500" width="7" height="7" rx=".8" fill="#0a0a0a"/><path d="M54.300 3.800L59.300 8.500H54.300z" fill="#fff"/></g></svg><em style="left:59.500px">0</em></span></div>
<div class="row" style="top:45.27px"><span class="k">Цвет</span><span class="v"><svg width="9.800" height="9" viewBox="0 0 8 8" preserveAspectRatio="none" style="vertical-align:top;margin:2.500px 2px 0 1.500px"><rect width="8" height="8" rx="1" fill="#080808"/><path d="M1 1.500L7 7H1z" fill="#fff"/></svg>По слою</span></div>
<div class="row" style="top:60.36px"><span class="k">Тип линий</span><span class="v n"><b class="abs" style="left:1.500px;top:7px;width:38px;height:1px;background:#e8e8e8"></b><em style="left:41.500px">По слою</em></span></div>
<div class="row" style="top:75.45px"><span class="k">Масштаб типа линий</span><span class="v">100</span></div>
<div class="row" style="top:90.54px"><span class="k">Вес линий</span><span class="v n"><b class="abs" style="left:1.500px;top:7px;width:38px;height:1px;background:#e8e8e8"></b><em style="left:41.500px">По слою</em></span></div>
<div class="row" style="top:105.63px"><span class="k">Толщина</span><span class="v">0</span></div>
<div class="row h" style="top:120.72px"><span class="k">Стили</span><i></i></div>
<div class="row" style="top:135.81px"><span class="k">Стиль текста</span><span class="v">ГОСТ 2.304</span></div>
<div class="row" style="top:150.9px"><span class="k">Размерный стиль</span><span class="v">СПДС</span></div>
<div class="row h" style="top:165.99px"><span class="k">Стиль печати</span><i></i></div>
<div class="row" style="top:181.08px"><span class="k">Стиль печати</span><span class="v d">По цвету</span></div>
<div class="row" style="top:196.17px"><span class="k">Таблица стилей печати</span><span class="v">Нет</span></div>
<div class="row" style="top:211.26px"><span class="k">Пространство таблицы с…</span><span class="v d">Модель</span></div>
<div class="row" style="top:226.35px"><span class="k">Тип стилей печати</span><span class="v d">Недоступно</span></div>
<div class="row h" style="top:241.44px"><span class="k">Разное</span><i></i></div>
<div class="row" style="top:256.53px"><span class="k">Знак ПСК Вкл</span><span class="v">Да</span></div>
<div class="row" style="top:271.62px"><span class="k">Знак ПСК в начале коор…</span><span class="v">Да</span></div>
<div class="row" style="top:286.71px"><span class="k">ПСК в каждом ВЭкране</span><span class="v">Да</span></div>
<div class="row" style="top:301.8px"><span class="k">Имя ПСК</span><span class="v">Мировая СК</span></div>
<div class="row" style="top:316.89px"><span class="k">Визуальный стиль</span><span class="v">2D-каркас</span></div>
<div id="pdiv" class="abs"></div>
</div>
<div class="abs" style="left:225px;top:85px;width:4px;height:460px;background:#4a4a4a"></div><div class="abs" style="left:228.700px;top:99px;width:1.500px;height:446px;background:#808080"></div>

<!-- CANVAS -->
<div id="tabbar" class="abs"></div>
<div id="dtab" class="abs"><span>Без имени0*</span><svg class="abs" style="left:72px;top:3.500px" width="6" height="6" viewBox="0 0 6 6"><path d="M.5.500l5 5M5.500.500l-5 5" stroke="#f0f0f0" stroke-width="1"/></svg></div>
<div id="canvas" class="abs"></div>
<div class="vb" style="left:235.400px;width:19px"><span>+</span></div>
<div class="vb" style="left:256.300px;width:39px"><span>Сверху</span></div>
<div class="vb" style="left:297.500px;width:50px"><span>2D-каркас</span></div>
<div class="vb" style="left:349.200px;width:110.400px"><span>--- нет связанных видов ---</span></div>
<svg class="abs" style="left:229px;top:100px" width="80" height="445" viewBox="229 100 80 445">
<path d="M280.200 100v396" stroke="#27622a" stroke-width="1"/>
<path d="M275.800 475.800l4.400 4.700 4.400-4.700M280.200 480.500v5" fill="none" stroke="#d4d4d4" stroke-width="1"/>
<path d="M280.200 496.500l-4.900 17h9.800z" fill="none" stroke="#d4d4d4" stroke-width="1"/>
<path d="M280.200 497v48" stroke="#d4d4d4" stroke-width="1.300"/>
</svg>

<!-- DIALOG -->
<div id="dlg" class="abs">
<div id="dtitle" class="abs">
<svg class="abs" style="left:5.600px;top:5.200px" width="9.600" height="10.200" viewBox="0 0 10 10"><defs><linearGradient id="gnc" x1="0" y1="0" x2="0" y2="1"><stop offset="0" stop-color="#40dcff"/><stop offset="1" stop-color="#2a98e2"/></linearGradient></defs><path d="M3 0h7v6a4 4 0 0 1-4 4H0V3a3 3 0 0 1 3-3z" fill="url(#gnc)"/><path d="M4 4.500V10" stroke="#1f86d2" stroke-width=".9"/><circle cx="4.700" cy="5.200" r="1" fill="#e8f8ff"/></svg>
<span class="dt" style="left:19.600px;top:5.600px">Открыть изображение</span>
<svg class="abs" style="left:642.700px;top:5.700px" width="8" height="8" viewBox="0 0 8 8"><path d="M.7.700l6.600 6.600M7.300.700L.700 7.300" stroke="#1a1a1a" stroke-width=".9"/></svg>
</div>
<div id="daddr" class="abs"><svg class="abs" style="left:0;top:0" width="100" height="38" viewBox="0 20.700 100 38">
<g fill="none" stroke="#4a4a4a" stroke-width=".9"><path d="M18 40H9.800M13.300 36.300L9.600 40l3.700 3.700"/><path d="M57 38.800l2.300 2.300 2.300-2.300"/><path d="M79.400 44v-8M75.700 39.600l3.700-3.800 3.700 3.800"/></g>
<path d="M33.800 40h8.200M38.500 36.300l3.700 3.700-3.700 3.700" fill="none" stroke="#a8a8a8" stroke-width=".9"/>
</svg>
<div class="box" style="left:94.600px;top:7.700px;width:405.400px;height:23px;border-color:#e3e3e3;border-bottom-color:#d0d0d0"></div>
<svg class="abs" style="left:101px;top:13.300px" width="11.500" height="9.500" viewBox="0 0 12 10"><path d="M0 1.500a1 1 0 0 1 1-1h3.200l1.300 1.300H11a1 1 0 0 1 1 1V9a1 1 0 0 1-1 1H1a1 1 0 0 1-1-1z" fill="#f0b429"/><path d="M0 3.200h12V9a1 1 0 0 1-1 1H1a1 1 0 0 1-1-1z" fill="#ffd75e"/></svg>
<svg class="abs" style="left:115.800px;top:17px" width="5.500" height="4.500" viewBox="0 0 5.500 4.500" aria-label="«"><path d="M2.300.400L.600 2.200l1.700 1.800M4.800.400L3.100 2.200l1.700 1.800" fill="none" stroke="#555" stroke-width=".7"/></svg>
<span class="dt" style="left:127px;top:13.900px">2. МТ</span>
<svg class="abs" style="left:153.500px;top:17px" width="3.500" height="5.500" viewBox="0 0 3.500 5.500"><path d="M.6.600l2.200 2.200L.600 5" fill="none" stroke="#555" stroke-width=".8"/></svg>
<span class="dt" style="left:163px;top:13.900px">Статьи</span>
<svg class="abs" style="left:194.500px;top:17px" width="3.500" height="5.500" viewBox="0 0 3.500 5.500"><path d="M.6.600l2.200 2.200L.600 5" fill="none" stroke="#555" stroke-width=".8"/></svg>
<span class="dt" style="left:205px;top:13.900px">3. Топ 5 причин работать с растрами в nanoCAD</span>
<svg class="abs" style="left:456px;top:15px" width="40" height="10" viewBox="0 0 40 10"><path d="M1.500 3.500l2.800 2.800 2.800-2.800" fill="none" stroke="#555" stroke-width=".9"/><path d="M33.600 4.800a3.400 3.400 0 1 1-1.200-2.600" fill="none" stroke="#555" stroke-width=".9"/><path d="M32.800.500v2h-2" fill="none" stroke="#555" stroke-width=".9"/></svg>
<div class="box" style="left:508.600px;top:7.700px;width:140.400px;height:23px;border-color:#e3e3e3;border-bottom-color:#d0d0d0"></div>
<span class="dt" style="left:514.600px;top:13.900px;color:#6b6b6b">Поиск в: 3. Топ 5 причин р...</span>
<svg class="abs" style="left:630.500px;top:15px" width="9" height="9" viewBox="0 0 9 9"><circle cx="5.500" cy="3.500" r="2.600" fill="none" stroke="#444" stroke-width=".9"/><path d="M3.600 5.400L.800 8.200" stroke="#444" stroke-width="1"/></svg></div>
<div id="dtool" class="abs"><span class="dt" style="left:11.700px;top:6.400px;color:#1c2340">Упорядочить</span>
<span class="abs" style="left:65.900px;top:10.200px;width:0;height:0;border-left:2.800px solid transparent;border-right:2.800px solid transparent;border-top:3.200px solid #1c2340"></span>
<span class="dt" style="left:93px;top:6.400px;color:#1c2340">Новая папка</span>
<svg class="abs" style="left:570px;top:4px" width="82" height="14" viewBox="570 62.800 82 14">
<rect x="574.400" y="66.200" width="8.200" height="6.600" rx=".8" fill="#fff" stroke="#333" stroke-width=".9"/><path d="M574 74.300h9" stroke="#333" stroke-width=".9"/>
<path d="M590.800 69l2.400 2.800 2.400-2.800z" fill="#1c2340"/>
<rect x="611.600" y="66" width="9.600" height="7.800" rx=".8" fill="#fff" stroke="#333" stroke-width=".9"/><rect x="617.200" y="66.400" width="3.600" height="7" fill="#2f86e0"/>
<circle cx="641.700" cy="70" r="5.500" fill="#0f7ad8"/>
</svg>
<span class="abs" style="left:639.300px;top:5.200px;font-size:8.500px;line-height:10px;font-weight:bold;color:#fff">?</span></div>
<div id="dnav" class="abs"><svg class="abs" style="left:22.9px;top:6.7px" width="11.200" height="9.400" viewBox="0 0 12 10"><path d="M0 1.500a1 1 0 0 1 1-1h3.200l1.300 1.300H11a1 1 0 0 1 1 1V9a1 1 0 0 1-1 1H1a1 1 0 0 1-1-1z" fill="#f0b429"/><path d="M0 3.200h12V9a1 1 0 0 1-1 1H1a1 1 0 0 1-1-1z" fill="#ffd95f"/></svg>
<span class="dt" style="left:37.9px;top:6.8px">Тиньков</span>
<svg class="abs" style="left:22.9px;top:29.1px" width="11.200" height="9.400" viewBox="0 0 12 10"><path d="M0 1.500a1 1 0 0 1 1-1h3.200l1.300 1.300H11a1 1 0 0 1 1 1V9a1 1 0 0 1-1 1H1a1 1 0 0 1-1-1z" fill="#f0b429"/><path d="M0 3.200h12V9a1 1 0 0 1-1 1H1a1 1 0 0 1-1-1z" fill="#ffd95f"/></svg>
<span class="dt" style="left:37.9px;top:29.2px">Владимир мартынов</span>
<svg class="abs" style="left:22.9px;top:51.4px" width="11.200" height="9.400" viewBox="0 0 12 10"><path d="M0 1.500a1 1 0 0 1 1-1h3.200l1.300 1.300H11a1 1 0 0 1 1 1V9a1 1 0 0 1-1 1H1a1 1 0 0 1-1-1z" fill="#f0b429"/><path d="M0 3.200h12V9a1 1 0 0 1-1 1H1a1 1 0 0 1-1-1z" fill="#ffd95f"/></svg>
<span class="dt" style="left:37.9px;top:51.5px">Афиши</span>
<svg class="abs" style="left:22.9px;top:73.7px" width="11.200" height="9.400" viewBox="0 0 12 10"><path d="M0 1.500a1 1 0 0 1 1-1h3.200l1.300 1.300H11a1 1 0 0 1 1 1V9a1 1 0 0 1-1 1H1a1 1 0 0 1-1-1z" fill="#f0b429"/><path d="M0 3.200h12V9a1 1 0 0 1-1 1H1a1 1 0 0 1-1-1z" fill="#ffd95f"/></svg>
<span class="dt" style="left:37.9px;top:73.8px">Готовые анонсы</span>
<div class="abs" style="left:6.200px;top:100.800px;width:84.200px;height:1px;background:#e4e4e4"></div>
<div class="abs" style="left:.800px;top:201.100px;width:94.800px;height:22.300px;background:#d9d9d9"></div>
<svg class="abs" style="left:7.1px;top:121.4px" width="7" height="4.500" viewBox="0 0 7 4.500"><path d="M.7.700L3.500 3.500 6.300.700" fill="none" stroke="#222" stroke-width="1.100"/></svg>
<svg class="abs" style="left:22.900px;top:118.400px" width="11.200" height="10.600" viewBox="0 0 12 11"><defs><linearGradient id="gmon" x1="0" y1="0" x2="1" y2="1"><stop offset="0" stop-color="#35c3f0"/><stop offset="1" stop-color="#1587d8"/></linearGradient></defs><rect width="12" height="8.200" rx=".8" fill="url(#gmon)"/><path d="M5.300 8.200h1.400v1.600H5.300zM3.300 9.800h5.400v.9H3.300z" fill="#8a9aa8"/></svg>
<span class="dt" style="left:37.9px;top:118.6px">Этот компьютер</span>
<svg class="abs" style="left:14px;top:142.5px" width="4" height="7" viewBox="0 0 4 7"><path d="M.7.700L3.300 3.500.700 6.300" fill="none" stroke="#6a6a6a" stroke-width=".9"/></svg>
<svg class="abs" style="left:28.7px;top:145px;overflow:visible" width="11" height="4" viewBox="0 0 11 4"><path d="M1.200 .4h8.600L11 1.600H0z" fill="#e3e3e3"/><rect y="1.500" width="11" height="2" rx=".5" fill="#3c3c3c"/><rect x="1" y="2.100" width="2.500" height=".7" fill="#3fae4a"/><path d="M0 0h1.300v1.300H0zM1.800 0h1.300v1.300H1.800zM0 1.800h1.300v1.300H0zM1.800 1.800h1.300v1.300H1.800z" fill="#1a78e0" transform="translate(0 -4)"/></svg>
<span class="dt" style="left:43.2px;top:141.4px">Локальный диск (C:)</span>
<svg class="abs" style="left:14px;top:164.5px" width="4" height="7" viewBox="0 0 4 7"><path d="M.7.700L3.300 3.500.700 6.300" fill="none" stroke="#6a6a6a" stroke-width=".9"/></svg>
<svg class="abs" style="left:28.7px;top:166.5px;overflow:visible" width="11" height="4" viewBox="0 0 11 4"><path d="M1.200 .4h8.600L11 1.600H0z" fill="#e3e3e3"/><rect y="1.500" width="11" height="2" rx=".5" fill="#3c3c3c"/><rect x="1" y="2.100" width="2.500" height=".7" fill="#3fae4a"/></svg>
<span class="dt" style="left:43.2px;top:163.4px">Локальный диск (D:)</span>
<svg class="abs" style="left:14px;top:186.9px" width="4" height="7" viewBox="0 0 4 7"><path d="M.7.700L3.300 3.500.700 6.300" fill="none" stroke="#6a6a6a" stroke-width=".9"/></svg>
<svg class="abs" style="left:28.7px;top:189px;overflow:visible" width="11" height="4" viewBox="0 0 11 4"><path d="M1.200 .4h8.600L11 1.600H0z" fill="#e3e3e3"/><rect y="1.500" width="11" height="2" rx=".5" fill="#3c3c3c"/><rect x="1" y="2.100" width="2.500" height=".7" fill="#3fae4a"/></svg>
<span class="dt" style="left:43.2px;top:185.8px">Жесткий (E:)</span>
<svg class="abs" style="left:8.5px;top:208.9px" width="4" height="7" viewBox="0 0 4 7"><path d="M.7.700L3.300 3.500.700 6.300" fill="none" stroke="#6a6a6a" stroke-width=".9"/></svg>
<svg class="abs" style="left:23.2px;top:211px;overflow:visible" width="11" height="4" viewBox="0 0 11 4"><path d="M1.200 .4h8.600L11 1.600H0z" fill="#e3e3e3"/><rect y="1.500" width="11" height="2" rx=".5" fill="#3c3c3c"/><rect x="1" y="2.100" width="2.500" height=".7" fill="#3fae4a"/></svg>
<span class="dt" style="left:37.7px;top:207.8px">Жесткий (E:)</span>
<svg class="abs" style="left:8.5px;top:230.9px" width="4" height="7" viewBox="0 0 4 7"><path d="M.7.700L3.300 3.500.700 6.300" fill="none" stroke="#6a6a6a" stroke-width=".9"/></svg>
<svg class="abs" style="left:22px;top:229.400px" width="12" height="10.500" viewBox="0 0 12 10.500"><rect x="1" y="2" width="7.500" height="5.500" rx=".6" fill="#2a9be6"/><rect x="5" width="6.500" height="4.800" rx=".6" fill="#5cc4f4" stroke="#fff" stroke-width=".5"/><path d="M4 7.500h1.600v1.600H4zM2.500 9.100h4.600v.8H2.500z" fill="#7a8896"/></svg>
<span class="dt" style="left:38.3px;top:229.8px">Сеть</span>
<svg class="abs" style="left:7.1px;top:255.3px" width="7" height="4.500" viewBox="0 0 7 4.500"><path d="M.7.700L3.500 3.500 6.300.700" fill="none" stroke="#222" stroke-width="1.100"/></svg>
<svg class="abs" style="left:22.600px;top:251.800px" width="10.500" height="11" viewBox="0 0 10 10"><path d="M3 0h7v6a4 4 0 0 1-4 4H0V3a3 3 0 0 1 3-3z" fill="url(#gnc)" stroke="#1f86d2" stroke-width=".5"/><path d="M4 4.500V10" stroke="#1f86d2" stroke-width=".9"/><circle cx="4.900" cy="5.200" r="1.100" fill="#e8f8ff"/></svg>
<span class="dt" style="left:38.3px;top:252.5px">nanoCAD</span>
<svg class="abs" style="left:27.5px;top:274.2px" width="11.200" height="9.400" viewBox="0 0 12 10"><path d="M0 1.500a1 1 0 0 1 1-1h3.200l1.300 1.300H11a1 1 0 0 1 1 1V9a1 1 0 0 1-1 1H1a1 1 0 0 1-1-1z" fill="#f0b429"/><path d="M0 3.200h12V9a1 1 0 0 1-1 1H1a1 1 0 0 1-1-1z" fill="#ffd95f"/></svg>
<span class="dt" style="left:43.4px;top:274.4px">Samples</span></div>
<div id="dsplit" class="abs"></div>
<div class="abs" style="left:102.200px;top:205px;width:1.200px;height:121px;background:#8c8c8c;border-radius:1px"></div>
<div class="abs" style="left:120.600px;top:85px;width:73.200px;height:81px;background:#cce4f7;border:1px solid #b5d6f0;border-radius:1.500px"></div>
<div class="abs" style="left:124.500px;top:101.600px;width:63.300px;height:49.400px;background:#fff;box-shadow:.8px .8px 1.500px rgba(0,0,0,.45)"></div>
<svg class="abs" style="left:124.500px;top:101.600px" width="63.300" height="49.400" viewBox="0 0 63.300 49.400" fill="none" stroke-width=".45" opacity=".8">
<path d="M3 6h17v34l-4 5H7l-4-5z" stroke="#f3c9b4"/><path d="M5 8h13v31l-3 4H8l-3-4z" stroke="#dcdcdc"/>
<path d="M20 6h17v36H20z" stroke="#e2e2e2"/><path d="M37 6h19v30H37z" stroke="#e2e2e2"/><path d="M39 8h15v26H39z" stroke="#f3c9b4"/>
<path d="M28 13h6v16h-6z" stroke="#f0a3a3"/><path d="M29 15h4M29 17h4M29 19h4M29 21h4M29 23h4M29 25h4" stroke="#f0a3a3"/>
<path d="M22 14c2 4-1 8 1 12s0 8 2 10M41 36c1 3 4 3 5 0s4-3 5 0" stroke="#a8e0b4"/>
<path d="M29 42h7v5h-7zM29 43.500h7M29 45h7" stroke="#c8c8c8"/>
<path d="M3 12v22M56 10v20" stroke="#9fe0f0" stroke-width=".8"/>
<g fill="#f6b38c" stroke="none"><circle cx="11.500" cy="22" r=".8"/><circle cx="28" cy="9" r=".7"/><circle cx="46" cy="19" r=".8"/><circle cx="27" cy="22" r=".6"/><circle cx="52" cy="18.500" r=".5"/><circle cx="19" cy="36" r=".5"/><circle cx="24" cy="33" r=".5"/><circle cx="11" cy="44" r=".5"/><circle cx="14" cy="5" r=".4"/><circle cx="46" cy="5" r=".4"/></g>
</svg>
<span class="dt" style="left:130.400px;top:154.400px;color:#111">растр коттедж</span>
<div id="dbot" class="abs"><span class="dt" style="left:0;top:7.300px;width:118.500px;text-align:right;transform-origin:100% 50%;font-size:8.300px;transform:scaleX(.88)">Имя файла:</span>
<div class="box" style="left:122px;top:6px;width:385px;height:14.600px;border-color:#8a8a8a;border-radius:1.500px"></div>
<span class="dt" style="left:125.500px;top:7.500px;font-size:8.500px">растр коттедж</span>
<svg class="abs" style="left:494px;top:10.500px" width="8" height="5" viewBox="0 0 8 5"><path d="M.8.800L4 4 7.200.800" fill="none" stroke="#555" stroke-width=".8"/></svg>
<div class="box" style="left:516.500px;top:6px;width:130.500px;height:14.600px;border-color:#c9c9c9;border-radius:1.500px;background:#fbfbfb"></div>
<span class="dt" style="left:519.500px;top:7.500px;font-size:8.500px">Файлы изображений</span>
<svg class="abs" style="left:633px;top:10.500px" width="8" height="5" viewBox="0 0 8 5"><path d="M.8.800L4 4 7.200.800" fill="none" stroke="#555" stroke-width=".8"/></svg>
<div class="btn" style="left:517px;top:25px;width:59.700px;border-color:#2a7fd0;border-width:1.200px"><span>Открыть</span></div>
<div class="btn" style="left:587px;top:25px;width:59.400px"><span>Отмена</span></div>
<svg class="abs" style="left:650px;top:41px" width="7" height="7" viewBox="0 0 7 7" fill="#b0b0b0"><circle cx="5.500" cy="1.500" r=".6"/><circle cx="5.500" cy="3.500" r=".6"/><circle cx="3.500" cy="3.500" r=".6"/><circle cx="5.500" cy="5.500" r=".6"/><circle cx="3.500" cy="5.500" r=".6"/><circle cx="1.500" cy="5.500" r=".6"/></svg></div>
</div>

<svg class="abs" style="left:0;top:0;pointer-events:none" width="974" height="545" viewBox="0 0 974 545"><path d="M770.800 398L825.400 507" stroke="#f5141a" stroke-width="2"/><path d="M828.500 513.500l-7.500-8.200 6.800-3.400z" fill="#f5141a"/></svg>
</div>
</body>
</html>
